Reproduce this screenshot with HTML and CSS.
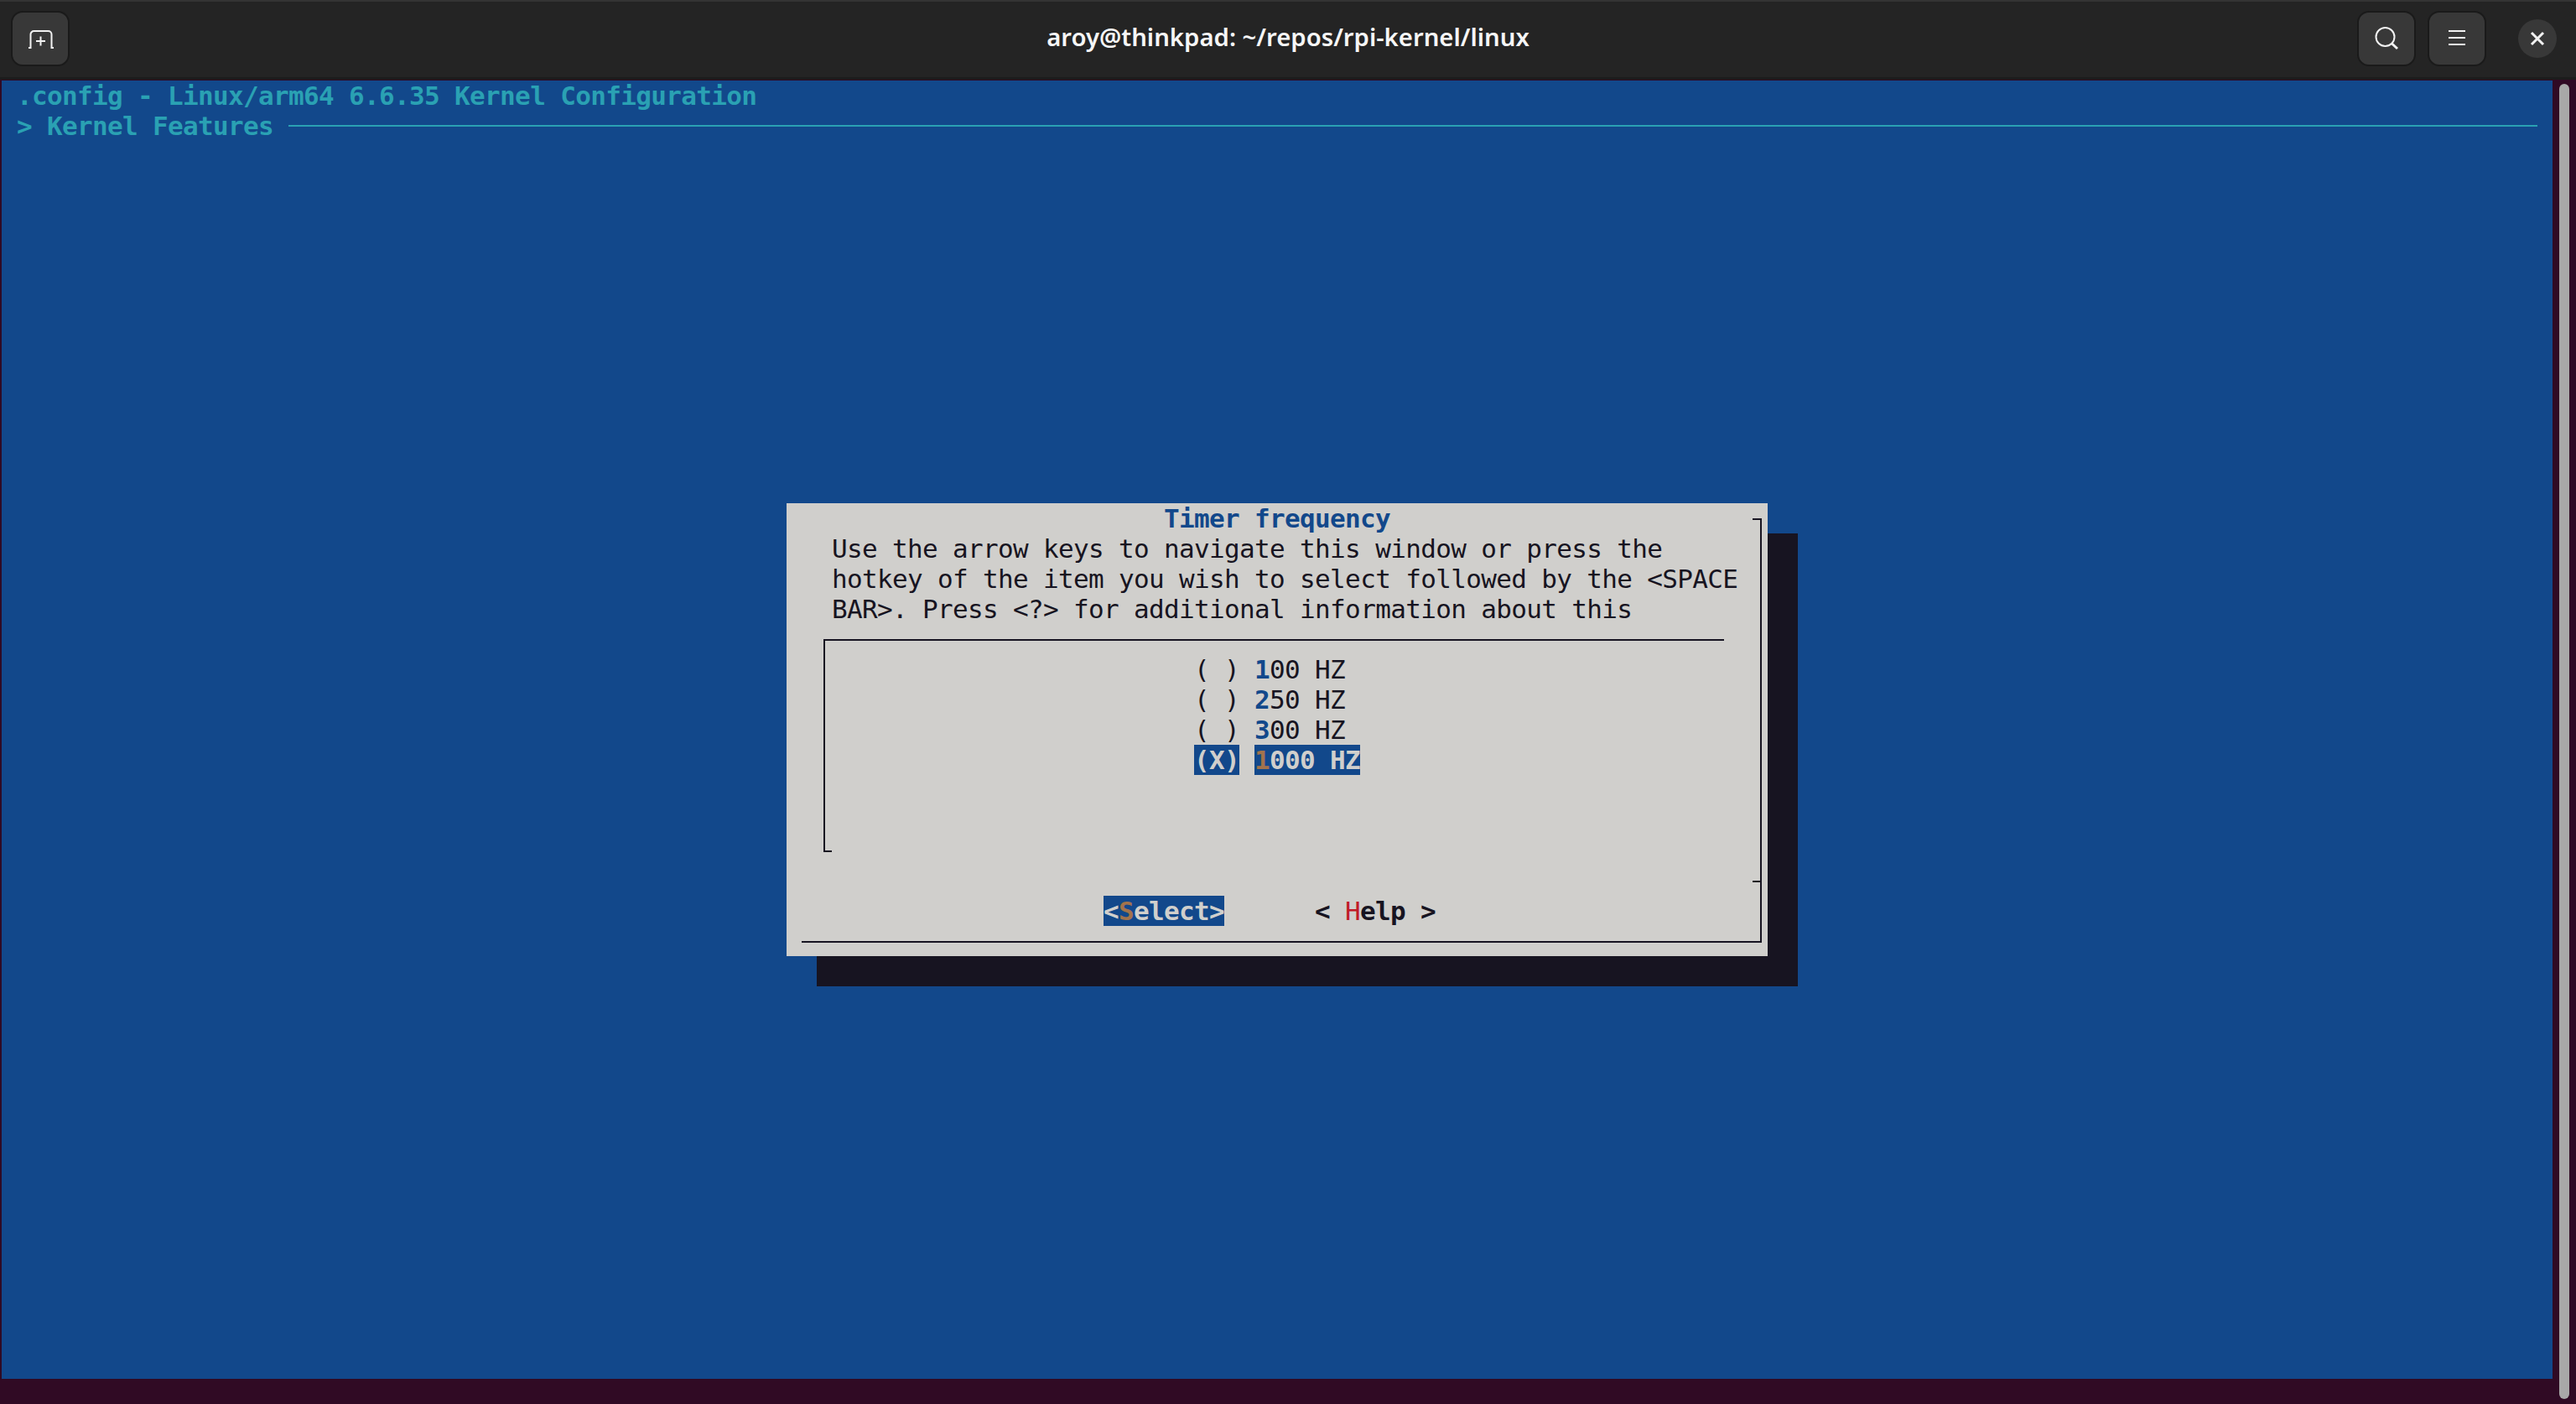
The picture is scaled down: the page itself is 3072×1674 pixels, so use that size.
FILE: index.html
```html
<!DOCTYPE html>
<html lang="en">
<head>
<meta charset="utf-8">
<title>aroy@thinkpad: ~/repos/rpi-kernel/linux</title>
<link rel="stylesheet" href="styles.css">
</head>
<body>
<div class="window">
  <header class="titlebar">
    <div class="tb-left">
      <button class="tb-btn" aria-label="New tab">
        <svg width="32" height="26" viewBox="0 0 32 26" class="ico"><path d="M2 24h2.500V8a4 4 0 0 1 4-4h17a4 4 0 0 1 4 4v16h2.500" fill="none" stroke="#f2f2f2" stroke-width="2"/><path d="M11 16h11M16.500 10.500v11" fill="none" stroke="#f2f2f2" stroke-width="2"/></svg>
      </button>
    </div>
    <div class="tb-title">aroy@thinkpad: ~/repos/rpi-kernel/linux</div>
    <div class="tb-right">
      <button class="tb-btn" aria-label="Search">
        <svg width="28" height="28" viewBox="0 0 28 28" class="ico"><circle cx="12.500" cy="12" r="11" fill="none" stroke="#f2f2f2" stroke-width="2"/><path d="M20 19.500l7 6.500" fill="none" stroke="#f2f2f2" stroke-width="3"/></svg>
      </button>
      <button class="tb-btn" aria-label="Menu">
        <svg width="20" height="20" viewBox="0 0 20 20" class="ico"><path d="M0 1h20M0 9h20M0 17h20" fill="none" stroke="#f2f2f2" stroke-width="2"/></svg>
      </button>
      <button class="tb-close" aria-label="Close">
        <svg width="18" height="18" viewBox="0 0 18 18" class="ico"><path d="M2 2l14 14M16 2L2 16" fill="none" stroke="#f2f2f2" stroke-width="3"/></svg>
      </button>
    </div>
  </header>
  <div class="body">
    <main class="screen">
      <div class="row cyan"> .config - Linux/arm64 6.6.35 Kernel Configuration</div>
      <div class="row cyan breadcrumb"><span class="crumb"> &gt; Kernel Features </span><span class="rule"></span></div>
      <section class="dialog">
        <div class="row"><span class="indent-title"></span><b class="blue">Timer frequency</b></div>
        <div class="row text">Use the arrow keys to navigate this window or press the</div>
        <div class="row text">hotkey of the item you wish to select followed by the &lt;SPACE</div>
        <div class="row text">BAR&gt;. Press &lt;?&gt; for additional information about this</div>
        <div class="row"></div>
        <div class="row item"><span>( )</span> <span><b class="blue">1</b>00 HZ</span></div>
        <div class="row item"><span>( )</span> <span><b class="blue">2</b>50 HZ</span></div>
        <div class="row item"><span>( )</span> <span><b class="blue">3</b>00 HZ</span></div>
        <div class="row item"><b class="sel">(X)</b> <b class="sel"><span class="hot">1</span>000 HZ</b></div>
        <div class="row"></div>
        <div class="row"></div>
        <div class="row"></div>
        <div class="row"></div>
        <div class="row buttons"><b class="sel">&lt;<span class="hot">S</span>elect&gt;</b><b class="help">&lt; <span class="red">H</span>elp &gt;</b></div>
        <div class="row"></div>
        <span class="frame"></span>
        <span class="frame-top"></span>
        <span class="frame-tick"></span>
        <span class="list-box"></span>
        <span class="list-tick"></span>
      </section>
    </main>
    <div class="scrollbar"><span class="thumb"></span></div>
  </div>
</div>
</body>
</html>
```
FILE: styles.css
```css
html, body { margin: 0; padding: 0; height: 1674px; overflow: hidden; background: #300a24; }
.window { width: 3072px; height: 1674px; display: flex; flex-direction: column; overflow: hidden; background: #300a24; }

.titlebar { height: 92px; box-sizing: border-box; margin-bottom: 4px; padding: 13px 0 0 13px; border-top: 2px solid #343434; background: #242424; display: flex; position: relative; box-shadow: 0 3px 0 #1c1c1c; }
.tb-left { display: flex; }
.tb-title { position: absolute; left: 0; right: 0; top: 20px; text-align: center; font: 600 29.3px/44px "Noto Sans", sans-serif; color: #f6f6f6; }
.tb-right { margin-left: auto; display: flex; align-items: flex-start; }
.tb-btn { width: 70px; height: 66px; margin: -2px 0 0; padding: 0; box-sizing: border-box; border: 2px solid #1a1a1a; border-radius: 14px; background: #383838; display: flex; align-items: center; justify-content: center; }
.tb-right .tb-btn { margin-right: 14px; }
.tb-close { width: 46px; height: 46px; margin: 8px 23px 0 24px; padding: 0; border: 0; border-radius: 50%; background: #383838; display: flex; align-items: center; justify-content: center; }
.ico { display: block; }

.body { flex: 1; display: flex; align-items: flex-start; padding-left: 2px; }
.screen { width: 3042px; height: 1548px; background: #12488b; color: #171421; font: 400 31px/36px "DejaVu Sans Mono", monospace; letter-spacing: -0.66px; }
.row { height: 36px; white-space: pre; }
.cyan { color: #2aa1b3; font-weight: 700; }
.breadcrumb { display: flex; align-items: center; width: 3024px; }
.crumb { white-space: pre; }
.rule { flex: 1; height: 2px; background: #2aa1b3; }

.dialog { position: relative; margin: 432px 0 0 936px; width: 1170px; height: 540px; background: #d0cfcc; box-shadow: 36px 36px 0 #171421; }
.text { padding-left: 54px; }
.indent-title { display: inline-block; width: 450px; }
.blue { color: #12488b; font-weight: 700; }
.item { padding-left: 486px; }
.sel { background: #12488b; color: #d0cfcc; display: inline-block; height: 36px; }
.hot { color: #a2734c; font-weight: 700; }
.red { color: #c01c28; font-weight: 400; }
.buttons { padding-left: 378px; }
.help { margin-left: 108px; }

.frame { position: absolute; left: 18px; top: 18px; width: 1143px; height: 504px; border-right: 2px solid #171421; border-bottom: 2px solid #171421; pointer-events: none; }
.frame-top { position: absolute; left: 1152px; top: 18px; width: 9px; height: 2px; background: #171421; }
.frame-tick { position: absolute; left: 1152px; top: 450px; width: 9px; height: 2px; background: #171421; }
.list-box { position: absolute; left: 44px; top: 162px; width: 1072px; height: 252px; border-left: 2px solid #171421; border-top: 2px solid #171421; }
.list-tick { position: absolute; left: 44px; top: 414px; width: 10px; height: 2px; background: #171421; }

.scrollbar { flex: 1; height: 100%; position: relative; }
.thumb { position: absolute; left: 8px; top: 4px; width: 12px; height: 1568px; border-radius: 6px; background: #a8a8a8; }
```
